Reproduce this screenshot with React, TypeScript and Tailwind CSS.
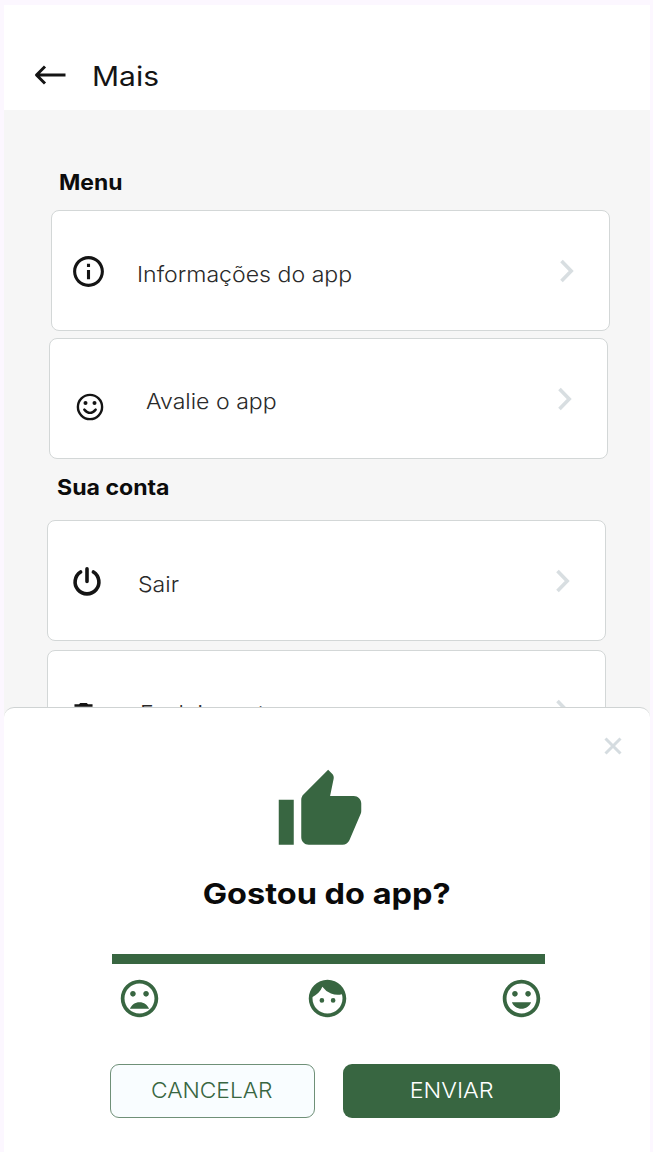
import type { ReactNode } from "react";
import { MdDelete, MdFace, MdMood, MdMoodBad, MdOutlineInfo, MdThumbUp } from "react-icons/md";

function BackArrow() {
  return (
    <svg width="34" height="22" viewBox="0 0 34 22" fill="none" stroke="#141414" strokeWidth="3" className="shrink-0">
      <path d="M12 2.500L3.500 11l8.500 8.500M3.500 11H32.500" strokeLinejoin="round" />
    </svg>
  );
}

function Chevron() {
  return (
    <svg width="16" height="24" viewBox="0 0 16 24" fill="none" stroke="#d8dee1" strokeWidth="3.600" className="shrink-0">
      <path d="M2.500 2L12.200 12l-9.700 10" />
    </svg>
  );
}

function PowerIcon() {
  return (
    <svg width="30" height="30" viewBox="0 0 30 30" fill="none" stroke="#141414" strokeWidth="3.600" strokeLinecap="round" className="-ml-[3px]">
      <path d="M15 2.800v12.600M8.600 5.900A11.900 11.900 0 1 0 21.400 5.900" />
    </svg>
  );
}

function SmileIcon() {
  return (
    <svg width="28" height="28" viewBox="0 0 28 28" fill="none" stroke="#141414" strokeWidth="2.400" className="mt-[17px]">
      <circle cx="14" cy="14" r="12.100" />
      <path d="M8.300 16.600Q14 23.200 19.700 16.600" strokeLinecap="round" />
      <circle cx="9.500" cy="9.900" r="2" fill="#141414" stroke="none" />
      <circle cx="18.500" cy="9.900" r="2" fill="#141414" stroke="none" />
    </svg>
  );
}

function Card({ className, icon, label, labelClass }: { className: string; icon: ReactNode; label: string; labelClass: string }) {
  return (
    <div className={`flex h-[121px] w-[559px] shrink-0 items-center rounded-[8px] border border-[#d3d7d7] bg-white pr-[34px] ${className}`}>
      <span className="flex w-20 justify-center text-[#141414]">{icon}</span>
      <span className={`flex-1 text-[22px] leading-7 font-light whitespace-nowrap text-[#2a2a2a] ${labelClass}`}>
        <span className="inline-block origin-left scale-x-[1.05]">{label}</span>
      </span>
      <Chevron />
    </div>
  );
}

export default function App() {
  return (
    <div className="h-[1152px] w-[653px] overflow-hidden bg-[#fcf7ff] pt-[5px] pr-[3px] pl-1 font-['Inter',sans-serif]">
      <div className="relative flex h-full flex-col overflow-hidden bg-[#f6f6f6]">
        <header className="flex h-[105px] shrink-0 items-center gap-[25px] bg-white pt-[35px] pl-[29px]">
          <BackArrow />
          <h1 className="origin-left scale-x-[1.11] pt-[3px] text-[27px] leading-8 text-[#141414]">Mais</h1>
        </header>
        <main className="flex flex-col items-start">
          <h2 className="mt-[59px] ml-[55px] origin-left scale-x-[1.09] text-[21px] leading-7 font-bold text-[#0c0c0c]">Menu</h2>
          <Card className="mt-[13px] ml-[47px]" icon={<MdOutlineInfo size={37} className="mt-px -ml-[7px]" />} label="Informações do app" labelClass="pl-[5px] pt-[6px]" />
          <Card className="mt-[7px] ml-[45px]" icon={<SmileIcon />} label="Avalie o app" labelClass="pl-[16px] pt-1" />
          <h2 className="mt-[15px] ml-[53px] origin-left scale-x-[1.1] text-[21px] leading-7 font-bold text-[#0c0c0c]">Sua conta</h2>
          <Card className="mt-[18px] ml-[43px]" icon={<PowerIcon />} label="Sair" labelClass="pl-[10px] pt-[6px]" />
          <Card className="mt-[9px] ml-[43px]" icon={<MdDelete size={31} className="mt-[7px] -ml-[9px]" />} label="Excluir conta" labelClass="pl-[12px] pt-1" />
        </main>
        <section className="absolute inset-x-0 bottom-0 flex h-[445px] flex-col items-center rounded-t-[10px] border-t border-[#cfd3d3] bg-white">
          <button aria-label="Fechar" className="mt-[29px] mr-[28px] flex size-[18px] self-end">
            <svg width="18" height="18" viewBox="0 0 18 18" stroke="#d5dce0" strokeWidth="3" fill="none">
              <path d="M1.500 1.500l15 15M16.500 1.500l-15 15" />
            </svg>
          </button>
          <MdThumbUp size={90} className="mt-[11px] mr-[15px] shrink-0 text-[#386641]" />
          <h2 className="mt-[18px] scale-x-[1.12] text-[29px] leading-10 font-bold whitespace-nowrap text-[#0a0a0a]">Gostou do app?</h2>
          <div className="mt-[40px] ml-[2px] h-[10px] w-[433px] shrink-0 bg-[#386641]" />
          <div className="mt-3 ml-[6px] flex w-[427px] shrink-0 justify-between text-[#386641]">
            <MdMoodBad size={45} />
            <MdFace size={45} className="mr-[5px]" />
            <MdMood size={45} />
          </div>
          <div className="mt-[43px] ml-4 flex shrink-0 gap-7">
            <button className="h-[54px] w-[205px] rounded-[9px] border border-[#6f9078] bg-[#f9fdff] pr-[2px] pb-0.5 text-[22px] font-light text-[#386641]">
              <span className="inline-block scale-x-[1.035]">CANCELAR</span>
            </button>
            <button className="h-[54px] w-[217px] rounded-[9px] bg-[#386641] pb-0.5 text-[22px] font-light text-white">
              <span className="inline-block scale-x-[1.06]">ENVIAR</span>
            </button>
          </div>
        </section>
      </div>
    </div>
  );
}
